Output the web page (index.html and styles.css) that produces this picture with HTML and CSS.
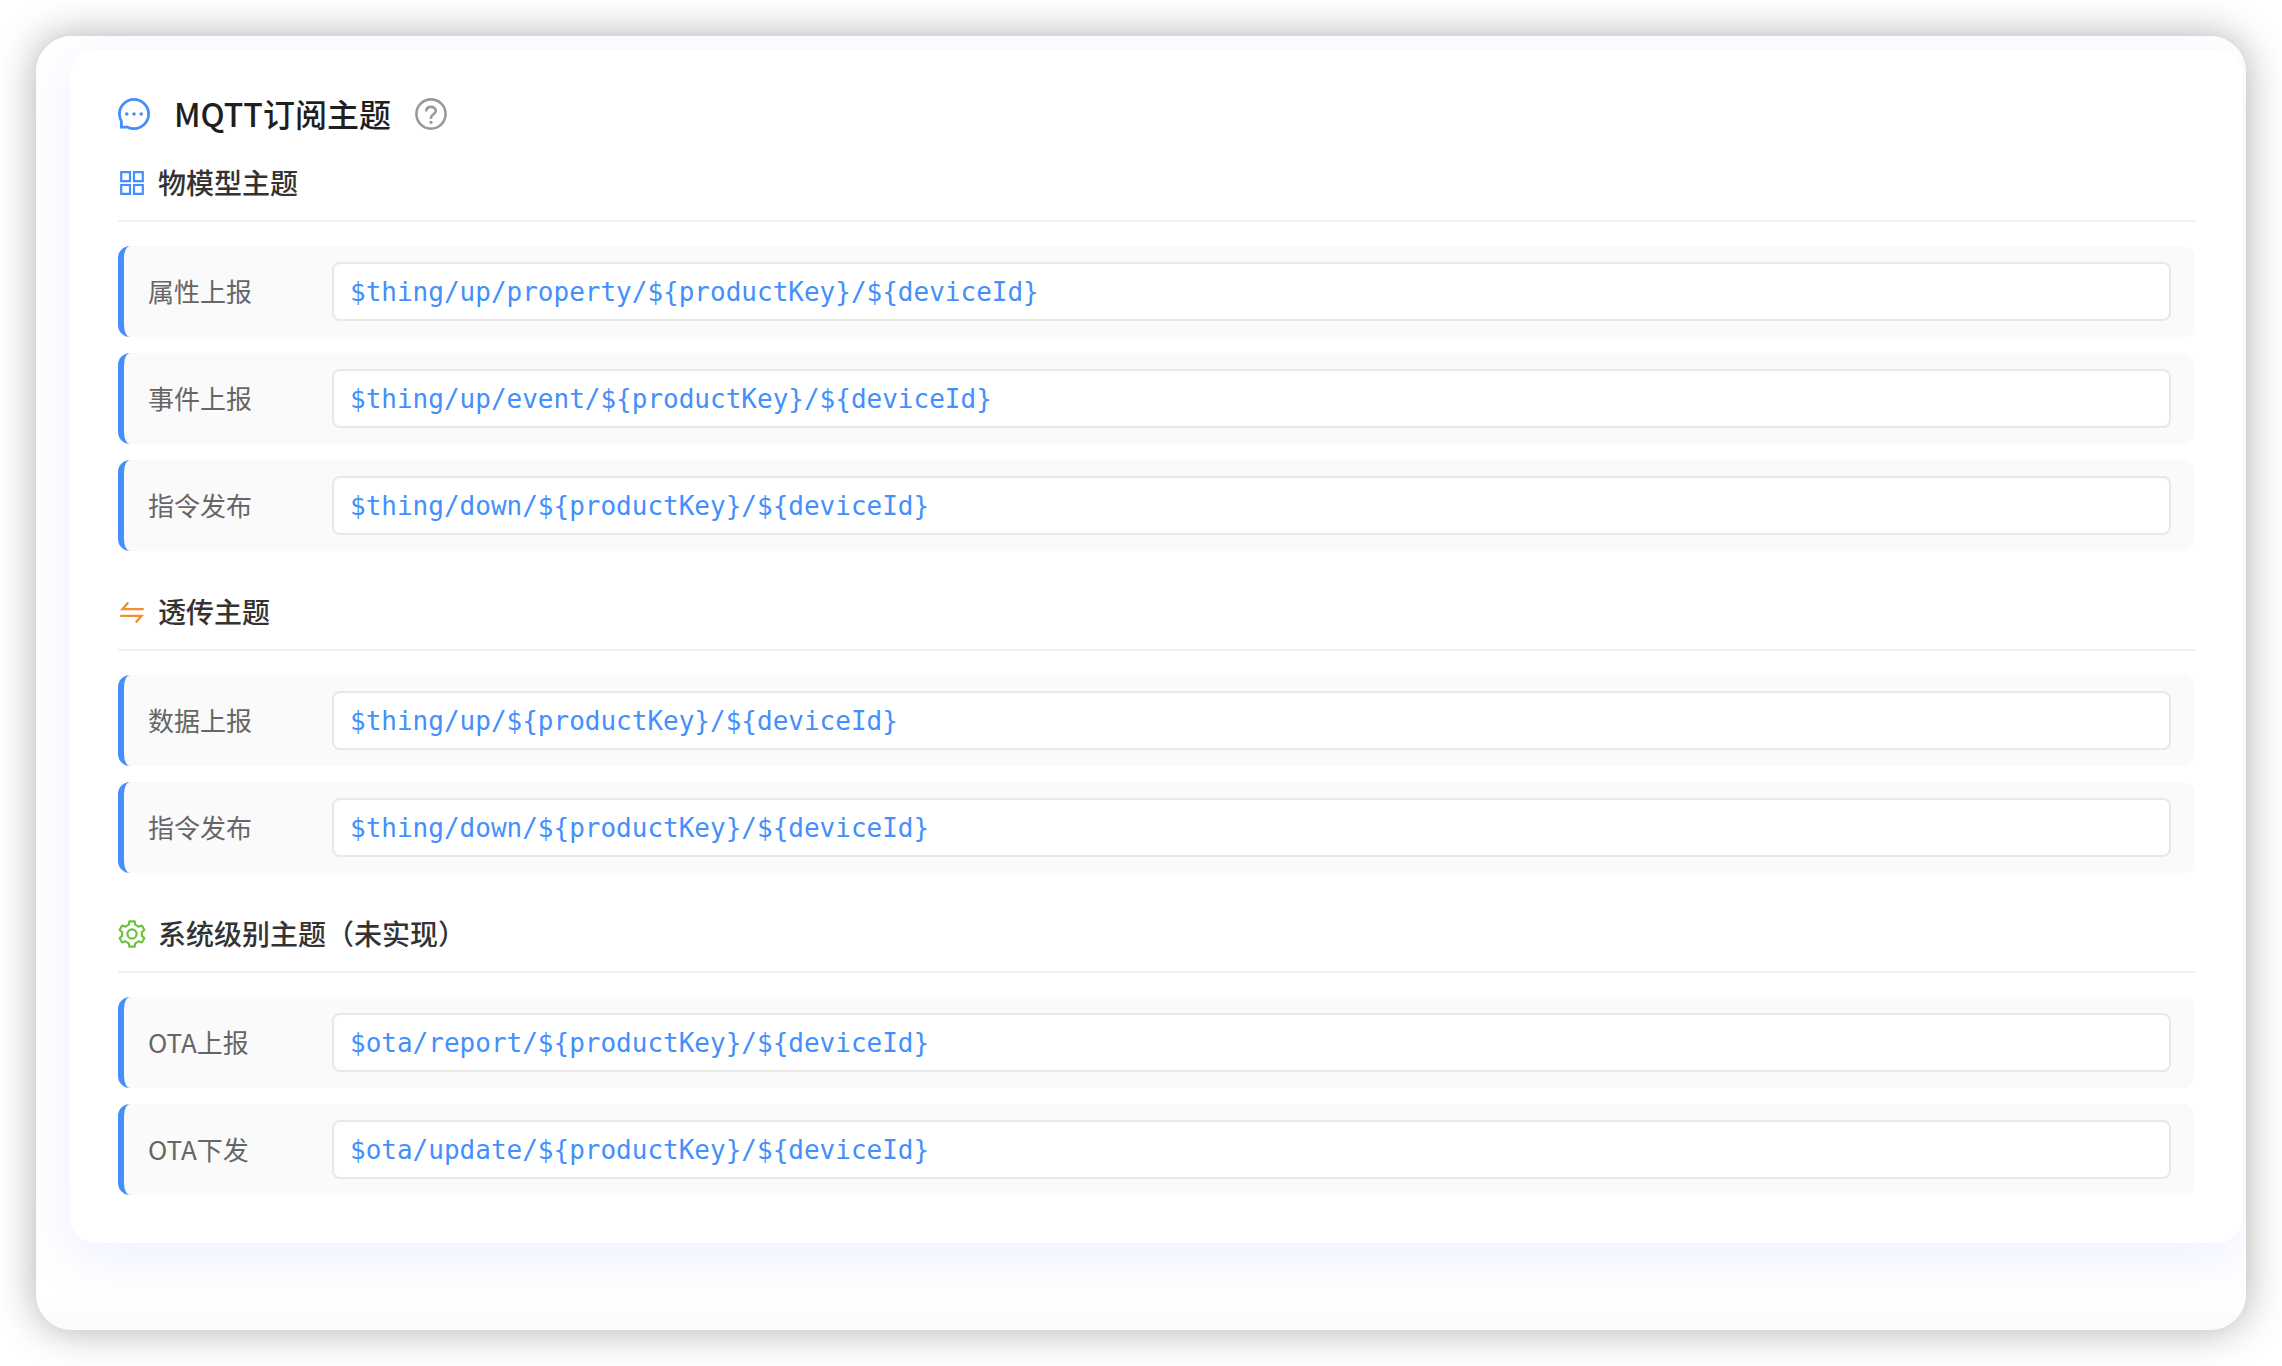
FILE: index.html
```
<!DOCTYPE html>
<html lang="zh-CN">
<head>
  <meta charset="UTF-8">
  <meta name="viewport" content="width=device-width, initial-scale=1.0">
  <title>MQTT订阅主题</title>
  <link rel="stylesheet" href="styles.css">
</head>
<body>
  <main class="window">
    <div class="card">
      <header class="card-header">
        <svg class="icon-chat" viewBox="0 0 32 32" fill="none" stroke="currentColor" stroke-width="2.8">
          <path d="M9.6 29.2Q12.6 30.6 16 30.6A14.6 14.6 0 1 0 1.4 16Q1.4 19.8 3.4 23.2V29.2Z"/>
          <g fill="currentColor" stroke="none">
            <circle cx="8.8" cy="16" r="1.8"/>
            <circle cx="16" cy="16" r="1.8"/>
            <circle cx="23.2" cy="16" r="1.8"/>
          </g>
        </svg>
        <h1>MQTT订阅主题</h1>
        <button class="help" type="button" aria-label="帮助">
          <svg viewBox="0 0 32 32" fill="none" stroke="currentColor" stroke-width="2.6">
            <circle cx="16" cy="16" r="14.6"/>
            <path d="M11.2 13.4C11.2 10.6 13.2 8.9 16 8.9S20.8 10.6 20.8 13C20.8 16.2 16 16.4 16 19.6V21"/>
            <circle cx="16" cy="24.3" r="1.6" fill="currentColor" stroke="none"/>
          </svg>
        </button>
      </header>

      <section class="topic-group">
        <h2 class="group-title">
          <svg class="icon-model" viewBox="0 0 28 28" fill="none" stroke="currentColor" stroke-width="2.2">
            <path d="M3.2 3.2H12V12.2H3.2ZM16 3.2H24.8V12.2H16ZM3.2 16H12V24.8H3.2ZM16 16H24.8V24.8H16Z"/>
          </svg>
          物模型主题
        </h2>
        <dl class="topic-list">
          <div class="topic-item">
            <dt>属性上报</dt>
            <dd><code>$thing/up/property/${productKey}/${deviceId}</code></dd>
          </div>
          <div class="topic-item">
            <dt>事件上报</dt>
            <dd><code>$thing/up/event/${productKey}/${deviceId}</code></dd>
          </div>
          <div class="topic-item">
            <dt>指令发布</dt>
            <dd><code>$thing/down/${productKey}/${deviceId}</code></dd>
          </div>
        </dl>
      </section>

      <section class="topic-group">
        <h2 class="group-title">
          <svg class="icon-pass" viewBox="0 0 28 28" fill="none" stroke="currentColor" stroke-width="2.3">
            <path d="M25.8 11.2H4.4L10.2 4.4M2.2 17.8H23.6L17.8 24.6"/>
          </svg>
          透传主题
        </h2>
        <dl class="topic-list">
          <div class="topic-item">
            <dt>数据上报</dt>
            <dd><code>$thing/up/${productKey}/${deviceId}</code></dd>
          </div>
          <div class="topic-item">
            <dt>指令发布</dt>
            <dd><code>$thing/down/${productKey}/${deviceId}</code></dd>
          </div>
        </dl>
      </section>

      <section class="topic-group">
        <h2 class="group-title">
          <svg class="icon-system" viewBox="0 0 28 28" fill="none" stroke="currentColor" stroke-width="2.2" stroke-linejoin="round">
            <path d="M11.4 1.3H16.6L17.3 4.8Q19.2 5.4 20.5 6.7L23.8 5.5L26.4 10L23.8 12.2Q24.2 14 23.8 15.8L26.4 18L23.8 22.5L20.5 21.3Q19.2 22.6 17.3 23.2L16.6 26.7H11.4L10.7 23.2Q8.8 22.6 7.5 21.3L4.2 22.5L1.6 18L4.2 15.8Q3.8 14 4.2 12.2L1.6 10L4.2 5.5L7.5 6.7Q8.8 5.4 10.7 4.8Z"/>
            <circle cx="14" cy="14" r="4.6"/>
          </svg>
          系统级别主题（未实现）
        </h2>
        <dl class="topic-list">
          <div class="topic-item">
            <dt>OTA上报</dt>
            <dd><code>$ota/report/${productKey}/${deviceId}</code></dd>
          </div>
          <div class="topic-item">
            <dt>OTA下发</dt>
            <dd><code>$ota/update/${productKey}/${deviceId}</code></dd>
          </div>
        </dl>
      </section>
    </div>
  </main>
</body>
</html>
```

FILE: styles.css
```
* {
  box-sizing: border-box;
}

body {
  margin: 0;
  padding: 36px;
  min-height: 100vh;
  display: flex;
  background-color: #fff;
  font-family: "Noto Sans CJK SC", sans-serif;
}

.window {
  flex: 1;
  min-width: 0;
  padding: 14px 3px 87px 34px;
  border-radius: 36px;
  overflow: hidden;
  background: linear-gradient(#fff calc(100% - 32px), #fbfbfb);
  box-shadow: 0 0 40px rgba(0, 0, 0, 0.32);
}

.card {
  padding: 48px;
  border-radius: 26px;
  background-color: #fff;
  box-shadow: 0 12px 56px rgba(64, 110, 255, 0.1);
}

.card-header {
  display: flex;
  align-items: center;
  height: 32px;
  margin-bottom: 32px;
}

.card-header svg {
  display: block;
  width: 32px;
  height: 32px;
}

.icon-chat {
  color: #438ffb;
}

h1 {
  margin: 0 24px;
  padding-bottom: 2px;
  font-size: 32px;
  font-weight: 500;
  line-height: 32px;
  color: #1f1f1f;
}

.help {
  padding: 0;
  border: none;
  background: none;
  color: #999;
  cursor: pointer;
}

.topic-group + .topic-group {
  margin-top: 40px;
}

.group-title {
  display: flex;
  align-items: center;
  gap: 12px;
  margin: 0 0 24px;
  padding-bottom: 17px;
  border-bottom: 2px solid #f0f0f0;
  font-size: 28px;
  font-weight: 500;
  line-height: 41px;
  color: #333;
}

.group-title svg {
  width: 28px;
  height: 28px;
}

.icon-model {
  color: #438ffb;
}

.icon-pass {
  color: #ee9136;
}

.icon-system {
  color: #6bc23c;
}

.topic-list {
  display: flex;
  flex-direction: column;
  gap: 16px;
  margin: 0;
}

.topic-item {
  display: flex;
  align-items: center;
  padding: 16px 24px;
  border-left: 6px solid #438ffb;
  border-radius: 12px;
  background-color: #fafafa;
}

.topic-item dt {
  width: 184px;
  padding-bottom: 2px;
  font-size: 26px;
  line-height: 36px;
  color: #666;
}

.topic-item dd {
  flex: 1;
  margin: 0;
  padding: 13px 16px 11px;
  border: 2px solid #e8e8e8;
  border-radius: 8px;
  background-color: #fff;
  line-height: 31px;
}

code {
  display: block;
  font-family: "DejaVu Sans Mono", monospace;
  font-size: 26px;
  color: #438ffb;
  overflow-wrap: anywhere;
}
```
